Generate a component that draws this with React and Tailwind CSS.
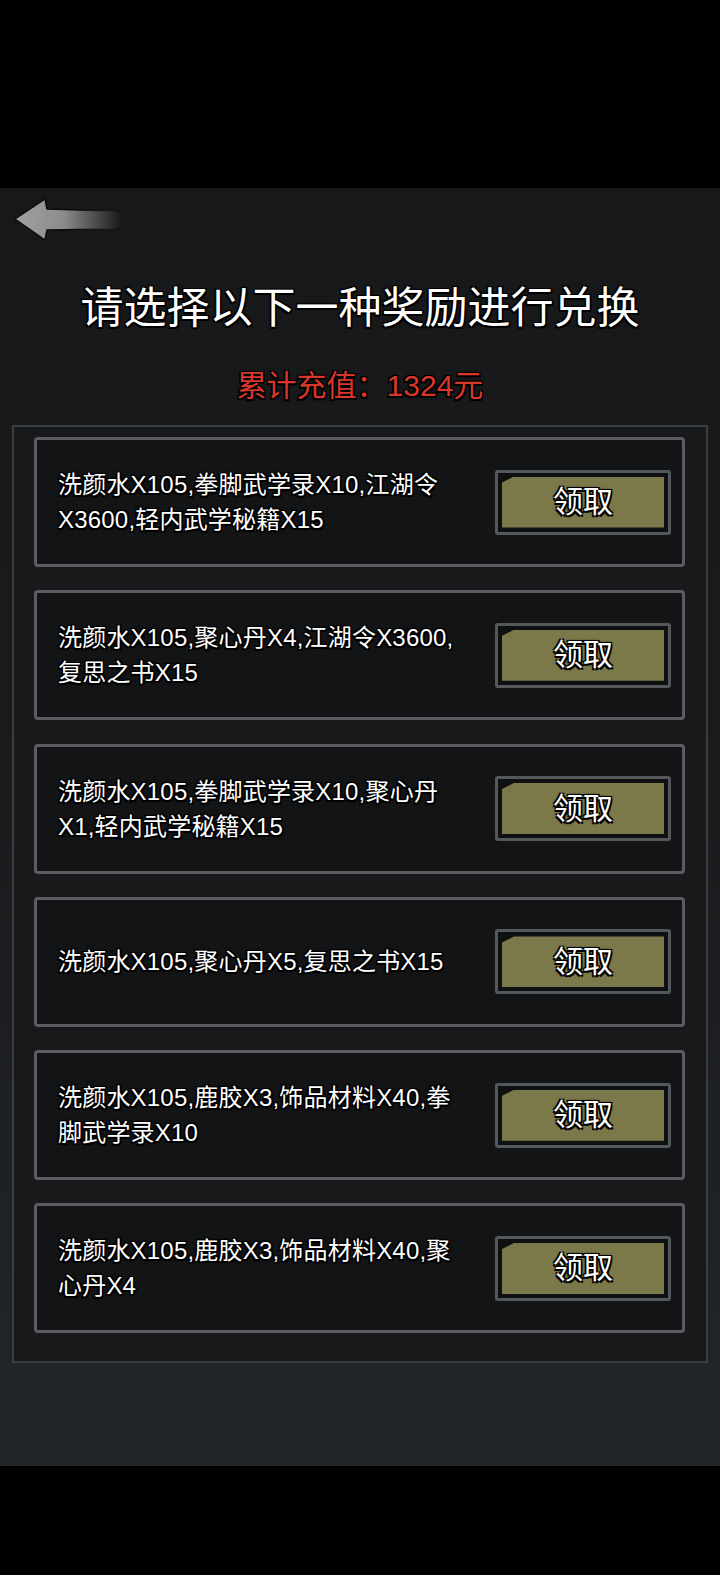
import React from 'react';

const outline =
  '[text-shadow:-1.5px_-1.5px_0_#000,1.5px_-1.5px_0_#000,-1.5px_1.5px_0_#000,1.5px_1.5px_0_#000,0_0_3px_#000]';

const rewards = [
  ['洗颜水X105,拳脚武学录X10,江湖令', 'X3600,轻内武学秘籍X15'],
  ['洗颜水X105,聚心丹X4,江湖令X3600,', '复思之书X15'],
  ['洗颜水X105,拳脚武学录X10,聚心丹', 'X1,轻内武学秘籍X15'],
  ['洗颜水X105,聚心丹X5,复思之书X15'],
  ['洗颜水X105,鹿胶X3,饰品材料X40,拳', '脚武学录X10'],
  ['洗颜水X105,鹿胶X3,饰品材料X40,聚', '心丹X4'],
];

const BackArrow = () => (
  <svg width="112" height="48" viewBox="0 0 112 48" className="ml-[12px] mt-[8px] block">
    <defs>
      <linearGradient id="shaft" x1="0" y1="0" x2="1" y2="0">
        <stop offset="0" stopColor="#a2a2a2" />
        <stop offset="0.45" stopColor="#8c8c8c" />
        <stop offset="1" stopColor="#8c8c8c" stopOpacity="0" />
      </linearGradient>
      <linearGradient id="edge" x1="0" y1="0" x2="1" y2="0">
        <stop offset="0" stopColor="#0a0a0a" />
        <stop offset="0.6" stopColor="#0a0a0a" />
        <stop offset="1" stopColor="#0a0a0a" stopOpacity="0" />
      </linearGradient>
    </defs>
    <path
      d="M3 23 L33 3 L35 13 L100 15 Q110 16 110 24 Q110 32 100 33 L35 34 L33 44 Z"
      fill="url(#shaft)"
      stroke="url(#edge)"
      strokeWidth="1.5"
      strokeLinejoin="round"
    />
  </svg>
);

const ClaimButton = () => (
  <div className="w-[176px] h-[65px] shrink-0 rounded-[3px] border-[3px] border-[#55585b] bg-[#0f1011] p-[4px]">
    <div className="h-full w-full bg-[#7b784a] [clip-path:polygon(12px_0,100%_0,100%_100%,0_100%,0_6px)] flex items-center justify-center">
      <span className={`text-[30px] leading-none text-white ${outline}`}>领取</span>
    </div>
  </div>
);

const RewardCard = ({ lines }) => (
  <div className="h-[130px] rounded-[4px] border-[3px] border-[#5b5d60] bg-[#131416] flex items-center justify-between pl-[21px] pr-[11px]">
    <div className={`text-[24px] leading-[35px] tracking-[0.2px] text-white ${outline}`}>
      {lines.map((l) => (
        <div key={l}>{l}</div>
      ))}
    </div>
    <ClaimButton />
  </div>
);

export default function App() {
  return (
    <div
      className="w-[720px] bg-black"
      style={{ fontFamily: '"Liberation Sans", "Noto Sans CJK SC", sans-serif' }}
    >
      <div className="h-[188px]" />
      <div className="h-[1278px] bg-gradient-to-b from-[#17181a] via-[#1a1b1d] to-[#22262a] flex flex-col">
        <BackArrow />
        <h1 className={`mt-[40px] text-center text-[43px] leading-[48px] text-white ${outline}`}>
          请选择以下一种奖励进行兑换
        </h1>
        <p className={`mt-[36px] text-center text-[30px] leading-[36px] text-[#d8372b] ${outline}`}>
          累计充值：1324元
        </p>
        <div className="mt-[21px] mx-[12px] border-2 border-[#3b3e41] bg-[#18191b] pt-[10px] pb-[28px] pl-[20px] pr-[21px] flex flex-col gap-[23.3px]">
          {rewards.map((r, i) => (
            <RewardCard key={i} lines={r} />
          ))}
        </div>
      </div>
      <div className="h-[109px]" />
    </div>
  );
}
